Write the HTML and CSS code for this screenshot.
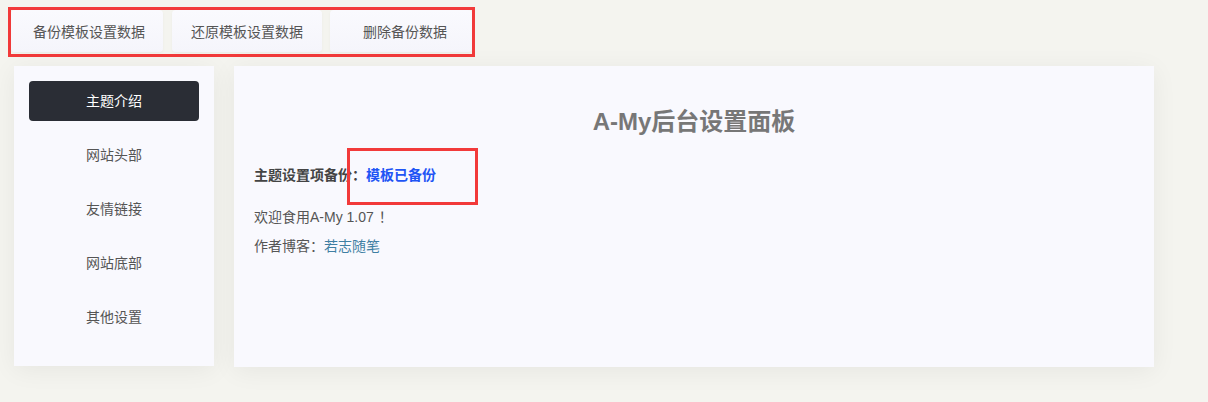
FILE: index.html
```html
<!DOCTYPE html>
<html lang="zh-CN">
<head>
<meta charset="utf-8">
<title>A-My后台设置面板</title>
<link rel="stylesheet" href="styles.css">
</head>
<body>
<div class="toolbar">
  <button class="tbtn tbtn-1">备份模板设置数据</button>
  <button class="tbtn tbtn-2">还原模板设置数据</button>
  <button class="tbtn tbtn-3">删除备份数据</button>
</div>
<div class="layout">
  <nav class="sidebar">
    <div class="nav-item active">主题介绍</div>
    <div class="nav-item">网站头部</div>
    <div class="nav-item">友情链接</div>
    <div class="nav-item">网站底部</div>
    <div class="nav-item">其他设置</div>
  </nav>
  <main class="panel">
    <h1 class="title">A-My后台设置面板</h1>
    <p class="backup"><span class="label">主题设置项备份：</span><span class="status">模板已备份</span></p>
    <p class="line welcome">欢迎食用A-My 1.07<span class="cjk">！</span></p>
    <p class="line">作者博客：<a class="link" href="#">若志随笔</a></p>
    <div class="mark"></div>
  </main>
</div>
</body>
</html>
```
FILE: styles.css
```css
* { box-sizing: border-box; }
html, body { margin: 0; padding: 0; }
body {
  background: #f4f4ef;
  font-family: "Liberation Sans", "Noto Sans CJK SC", sans-serif;
  font-size: 14px;
  color: #555;
  width: 1208px;
  height: 402px;
  overflow: hidden;
  text-spacing-trim: space-all;
}
.toolbar {
  display: inline-flex;
  margin: 7px 0 0 8px;
  border: 3px solid #f23a3a;
  padding: 0 0 2px 0;
  gap: 9px;
}
.tbtn {
  height: 42px;
  border: none;
  border-radius: 4px;
  background: linear-gradient(#fafafe, #f5f5fb);
  font-family: inherit;
  font-size: 14px;
  color: #555;
  padding: 0;
  box-shadow: 0 1px 3px rgba(0,0,0,0.04);
}
.tbtn-1 { width: 152px; padding-left: 4px; }
.tbtn-2 { width: 150px; }
.tbtn-3 { width: 142px; margin-left: -1px; padding-left: 8px; }
.layout {
  display: flex;
  gap: 20px;
  margin: 9px 0 0 14px;
}
.sidebar {
  width: 200px;
  height: 300px;
  background: #f9f9fe;
  padding: 15px;
  display: flex;
  flex-direction: column;
  gap: 14px;
  box-shadow: 0 4px 24px rgba(0,0,0,0.06);
}
.nav-item {
  height: 40px;
  line-height: 40px;
  text-align: center;
  color: #555;
  border-radius: 4px;
  flex: none;
}
.nav-item.active {
  background: #2a2d35;
  color: #fff;
}
.panel {
  position: relative;
  width: 920px;
  height: 301px;
  background: #f9f9fe;
  padding: 40px 20px 0 20px;
  box-shadow: 0 4px 24px rgba(0,0,0,0.06);
}
.title {
  margin: 0;
  height: 32px;
  line-height: 32px;
  font-size: 24px;
  font-weight: bold;
  color: #777;
  text-align: center;
}
.backup {
  margin: 27px 0 0 0;
  line-height: 20px;
  font-weight: bold;
  color: #444;
}
.status { color: #1f55f5; }
.line {
  margin: 9px 0 0 0;
  line-height: 20px;
}
.welcome { margin-top: 21px; }
.cjk { font-family: "Noto Sans CJK SC", sans-serif; margin-left: 5px; }
.link { color: #3f7fa3; text-decoration: none; }
.mark {
  position: absolute;
  left: 113px;
  top: 82px;
  width: 131px;
  height: 57px;
  border: 3px solid #f23a3a;
}
```
